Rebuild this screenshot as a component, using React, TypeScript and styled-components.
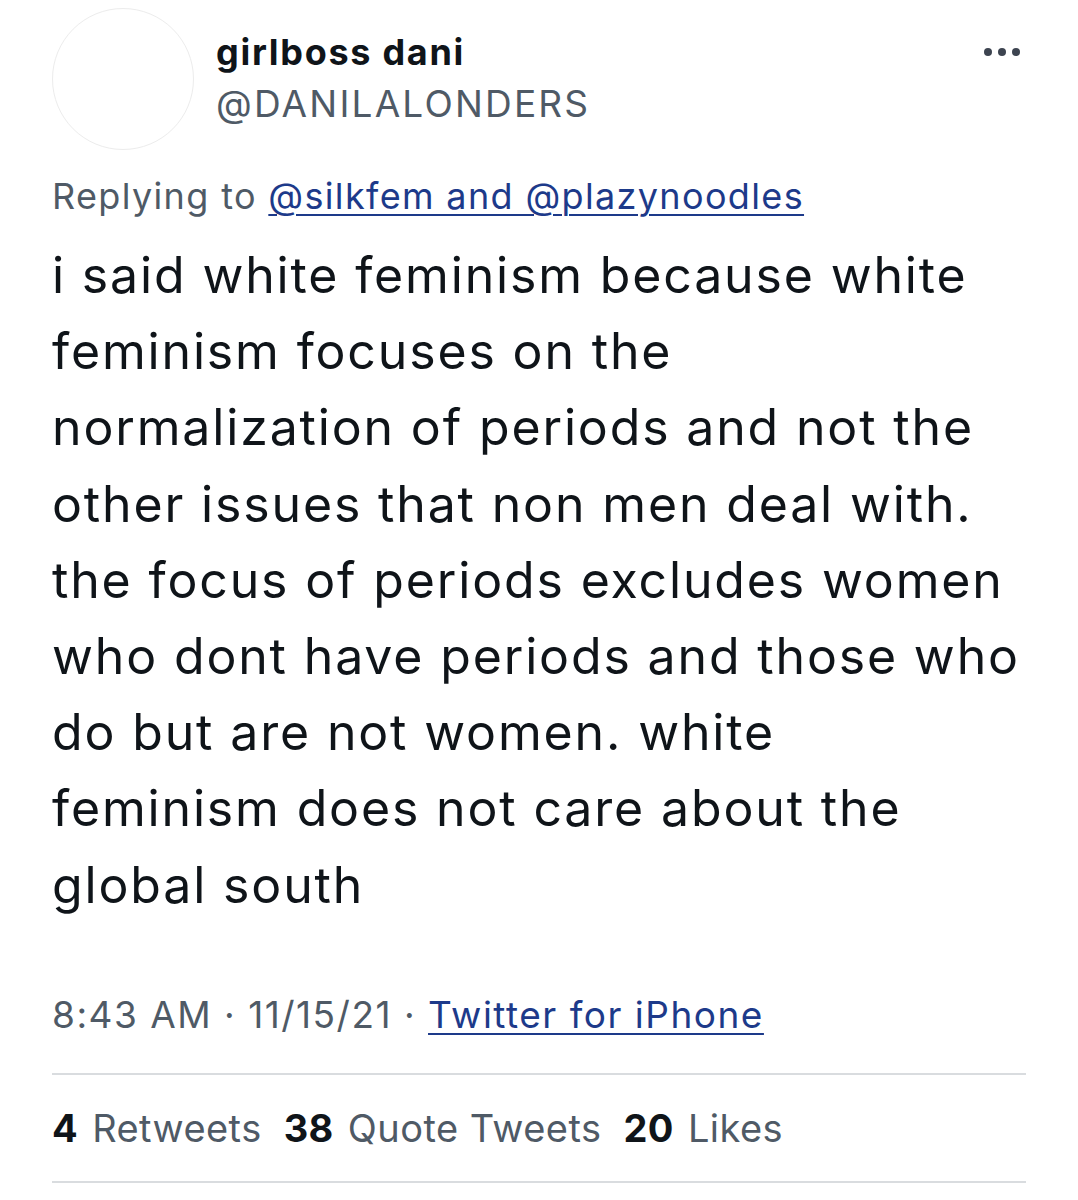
import React from "react";
import styled, { createGlobalStyle } from "styled-components";

const Global = createGlobalStyle`
  html, body { margin: 0; padding: 0; background: #ffffff; }
  body { font-family: Inter, "Noto Sans", sans-serif; -webkit-font-smoothing: antialiased; }
`;

const Page = styled.div`
  width: 1078px;
  padding: 8px 52px 0 52px;
  box-sizing: border-box;
`;

const Header = styled.div`
  display: flex;
  align-items: flex-start;
`;

const Avatar = styled.div`
  width: 142px;
  height: 142px;
  border-radius: 50%;
  border: 1px solid #ececec;
  box-sizing: border-box;
  flex-shrink: 0;
`;

const Names = styled.div`
  display: flex;
  flex-direction: column;
  margin-left: 22px;
  padding-top: 21px;
  flex: 1;
`;

const Name = styled.div`
  font-size: 36px;
  font-weight: 700;
  color: #0f1419;
  line-height: 46px;
  letter-spacing: 1.7px;
`;

const Handle = styled.div`
  margin-top: 5px;
  font-size: 37px;
  color: #4f5a66;
  line-height: 48px;
  letter-spacing: 2.2px;
`;

const More = styled.div`
  display: flex;
  gap: 6px;
  padding-top: 40px;
  margin-right: 6px;
`;

const Dot = styled.span`
  width: 8px;
  height: 8px;
  border-radius: 50%;
  background: #3d4450;
`;

const Replying = styled.div`
  margin-top: 23px;
  font-size: 36px;
  color: #4f5a66;
  line-height: 46px;
  letter-spacing: 1.35px;
`;

const Link = styled.span`
  color: #1d3a8a;
  text-decoration: underline;
  text-decoration-thickness: 2px;
  text-underline-offset: 5px;
`;

const Body = styled.div`
  margin-top: 18px;
  font-size: 50px;
  line-height: 76.2px;
  color: #0f1419;
  letter-spacing: 1.85px;
`;

const Meta = styled.div`
  margin-top: 69px;
  padding-bottom: 35px;
  font-size: 37px;
  line-height: 46px;
  color: #4f5a66;
  letter-spacing: 1.5px;
`;

const Divider = styled.div`
  height: 2px;
  background: #d9dcdf;
`;

const Stats = styled.div`
  display: flex;
  gap: 22px;
  padding: 30px 0 30px;
  font-size: 38px;
  line-height: 46px;
  color: #4f5a66;
  letter-spacing: 0.45px;
`;

const Stat = styled.span`
  display: flex;
  gap: 14px;
`;

const Count = styled.b`
  color: #0f1419;
  font-weight: 700;
`;

export default function App() {
  return (
    <>
      <Global />
      <Page>
        <Header>
          <Avatar />
          <Names>
            <Name>girlboss dani</Name>
            <Handle>@DANILALONDERS</Handle>
          </Names>
          <More>
            <Dot />
            <Dot />
            <Dot />
          </More>
        </Header>
        <Replying>
          Replying to <Link>@silkfem and @plazynoodles</Link>
        </Replying>
        <Body>
          i said white feminism because white
          <br />
          feminism focuses on the
          <br />
          normalization of periods and not the
          <br />
          other issues that non men deal with.
          <br />
          the focus of periods excludes women
          <br />
          who dont have periods and those who
          <br />
          do but are not women. white
          <br />
          feminism does not care about the
          <br />
          global south
        </Body>
        <Meta>
          8:43 AM · 11/15/21 · <Link>Twitter for iPhone</Link>
        </Meta>
        <Divider />
        <Stats>
          <Stat>
            <Count>4</Count>
            <span>Retweets</span>
          </Stat>
          <Stat>
            <Count>38</Count>
            <span>Quote Tweets</span>
          </Stat>
          <Stat>
            <Count>20</Count>
            <span>Likes</span>
          </Stat>
        </Stats>
        <Divider />
      </Page>
    </>
  );
}
